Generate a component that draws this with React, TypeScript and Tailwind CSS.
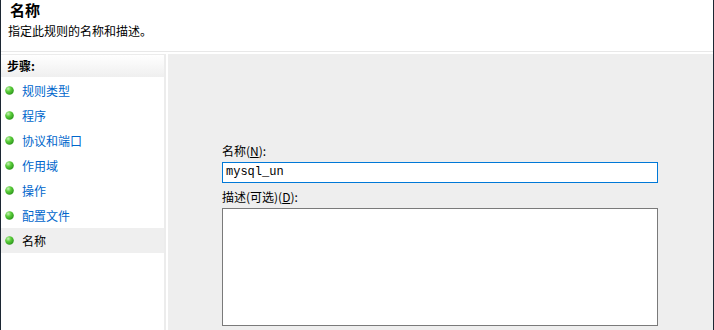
import React from "react";

const steps = ["规则类型", "程序", "协议和端口", "作用域", "操作", "配置文件", "名称"];

function Bullet() {
    return (
        <svg width="9" height="9" viewBox="0 0 9 9" className="shrink-0">
            <defs>
                <radialGradient id="g" cx="0.35" cy="0.3" r="0.7">
                    <stop offset="0" stopColor="#c8f0b8" />
                    <stop offset="0.45" stopColor="#5ccf3c" />
                    <stop offset="1" stopColor="#2f9a1e" />
                </radialGradient>
            </defs>
            <circle cx="4.5" cy="4.5" r="4.3" fill="url(#g)" />
        </svg>
    );
}

export default function App() {
    const font = { fontFamily: '"Noto Sans CJK SC", "Noto Sans", sans-serif' };
    return (
        <div
            className="w-[714px] h-[330px] bg-white flex flex-col overflow-hidden border-l border-r border-[#1c2733] text-[12px] text-black"
            style={font}
        >
            <div className="h-[51px] shrink-0 px-[9px]">
                <div className="text-[15px] font-bold leading-[19px]">名称</div>
                <div className="mt-[3px] leading-[17px] -ml-[2px]">指定此规则的名称和描述。</div>
            </div>
            <div className="h-[1px] bg-[#e8e8e8] shrink-0" />
            <div className="h-[2px] shrink-0" />
            <div className="flex flex-1 min-h-0">
                <div className="w-[165px] shrink-0 border-t border-r-2 border-[#ececec] flex flex-col">
                    <div className="h-[22px] bg-gradient-to-b from-white to-[#efefef] font-bold px-[6px] leading-[22px]">
                        步骤:
                    </div>
                    <div className="flex flex-col pt-[1px]">
                        {steps.map((s, i) => {
                            const last = i === steps.length - 1;
                            return (
                                <div
                                    key={s}
                                    className={`h-[25px] flex items-center gap-[8px] pl-[4px] ${last ? "bg-[#efefef] text-black" : "text-[#0066cc]"}`}
                                >
                                    <Bullet />
                                    <span className="leading-[25px]">{s}</span>
                                </div>
                            );
                        })}
                    </div>
                </div>
                <div className="w-[2px] shrink-0" />
                <div className="flex-1 bg-[#eeeeee] pl-[54px] pt-[89px]">
                    <div className="leading-[16px]">
                        名称(<span className="underline">N</span>):
                    </div>
                    <div
                        className="mt-[3px] w-[436px] h-[21px] bg-white border border-[#0078d7] px-[3px] leading-[19px] text-[12px]"
                        style={{ fontFamily: '"Liberation Mono", monospace' }}
                    >
                        mysql_un
                    </div>
                    <div className="mt-[6px] leading-[16px]">
                        描述(可选)(<span className="underline">D</span>):
                    </div>
                    <div className="mt-[3px] w-[436px] h-[118px] bg-white border border-[#7a7a7a]" />
                </div>
            </div>
        </div>
    );
}
